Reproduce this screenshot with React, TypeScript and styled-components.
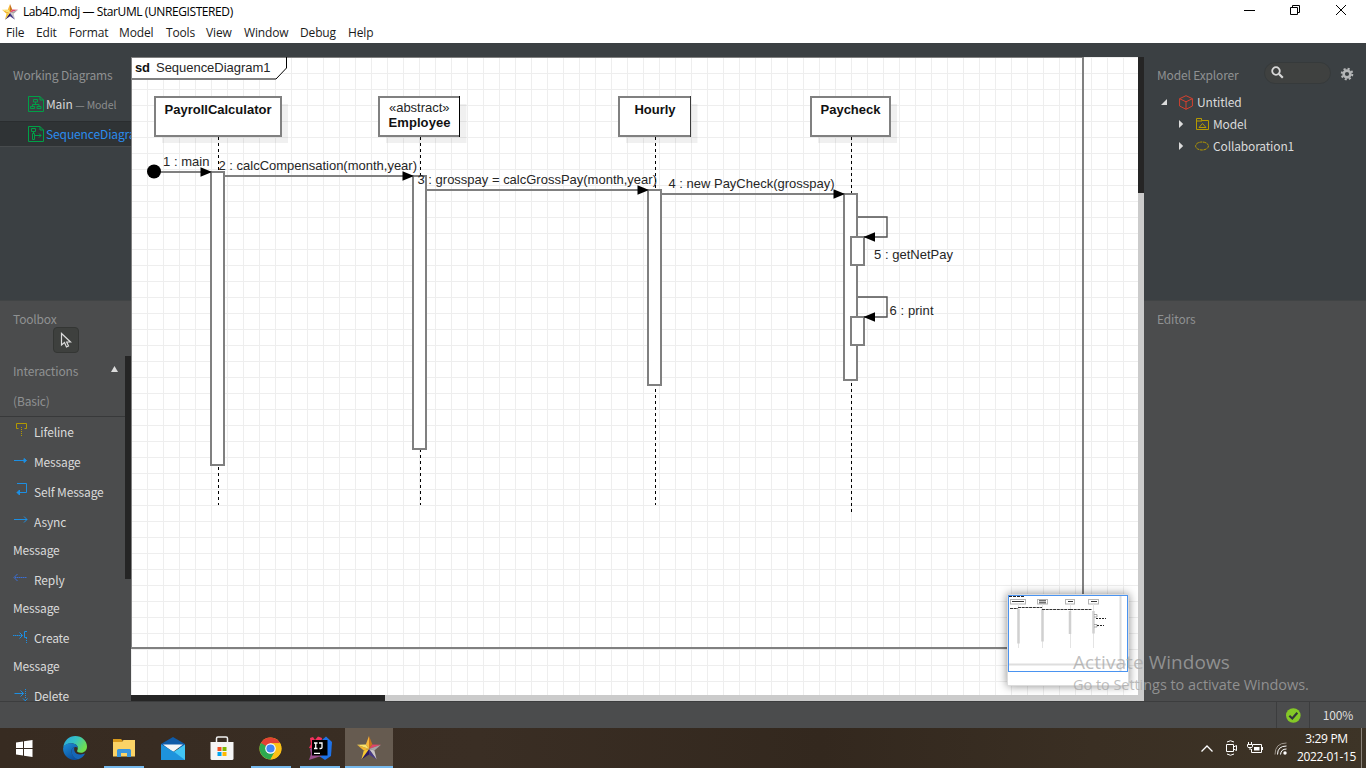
import React from "react";
import styled, { createGlobalStyle } from "styled-components";

const ui = `"Noto Sans CJK SC", "Noto Sans", sans-serif`;
const segoe = `"Open Sans", "Noto Sans", sans-serif`;

const Global = createGlobalStyle`
  * { box-sizing: border-box; }
  html, body { margin: 0; padding: 0; overflow: hidden; }
`;

const Screen = styled.div`
  width: 1366px;
  height: 768px;
  position: relative;
  display: flex;
  flex-direction: column;
  overflow: hidden;
  font-family: ${ui};
  background: #3b4043;
`;

/* ---------- window chrome ---------- */
const TitleBar = styled.header`
  height: 24px;
  flex: none;
  display: flex;
  align-items: flex-start;
  background: #fff;
  padding: 0 2px;
  > svg { margin-top: 4px; }
`;
const Title = styled.span`
  flex: 1;
  margin-left: 5px;
  font: 12px/24px ${segoe};
  letter-spacing: -0.41px;
  color: #000;
  white-space: nowrap;
`;
const WindowButton = styled.span<{ $w?: number }>`
  width: ${(p) => p.$w ?? 46}px;
  height: 20px;
  display: flex;
  align-items: center;
  justify-content: center;
`;
const MenuBar = styled.nav`
  height: 19px;
  flex: none;
  display: flex;
  background: #fff;
  padding-left: 6px;
`;
const MenuItem = styled.span<{ $w: number }>`
  width: ${(p) => p.$w}px;
  font: 12px/18px ${segoe};
  letter-spacing: -0.15px;
  color: #1a1a1a;
  white-space: nowrap;
`;

/* ---------- body ---------- */
const Body = styled.main`
  flex: 1;
  min-height: 0;
  display: flex;
`;
const Side = styled.aside<{ $w: number }>`
  width: ${(p) => p.$w}px;
  flex: none;
  display: flex;
  flex-direction: column;
  overflow: hidden;
`;
const UpperPane = styled.section`
  height: 257px;
  flex: none;
  padding-top: 20px;
  background: #3b4043;
`;
const LowerPane = styled.section`
  flex: 1;
  min-height: 0;
  padding-top: 6px;
  background: #4b4c4d;
  border-top: 1px solid #414445;
  overflow: hidden;
`;
const PaneTitle = styled.div`
  height: 24px;
  padding-left: 13px;
  font: 12px/24px ${ui};
  letter-spacing: -0.16px;
  color: #8f9192;
  white-space: nowrap;
`;
const DiagramRow = styled.div<{ $active?: boolean }>`
  height: ${(p) => (p.$active ? 26 : 34)}px;
  padding-left: 28px;
  display: flex;
  align-items: center;
  gap: 2px;
  font: 12px/22px ${ui};
  letter-spacing: -0.12px;
  color: ${(p) => (p.$active ? "#2b8ced" : "#d6d6d6")};
  background: ${(p) => (p.$active ? "#2f3335" : "transparent")};
  border-top: 1px solid ${(p) => (p.$active ? "#2a2d2f" : "transparent")};
  border-bottom: 1px solid ${(p) => (p.$active ? "#474b4d" : "transparent")};
  white-space: nowrap;
  svg { flex: none; }
`;
const Hint = styled.span`
  font-size: 10.5px;
  color: #8b8d8e;
`;
const SelectTool = styled.div`
  width: 26px;
  height: 26px;
  margin: -4px 0 0 53px;
  border: 1px solid #343634;
  border-radius: 4px;
  background: #3e403e;
  display: flex;
  align-items: center;
  justify-content: center;
`;
const ToolScroll = styled.div`
  display: flex;
  height: 345px;
  margin-top: 3px;
`;
const ToolList = styled.div`
  width: 125px;
  flex: none;
`;
const ToolThumb = styled.div`
  width: 6px;
  height: 223px;
  background: #252525;
`;
const Category = styled.div`
  height: 61px;
  display: flex;
  justify-content: space-between;
  padding: 0 7px 0 13px;
  border-bottom: 1px solid #38393a;
  font: 12px/30px ${ui};
  color: #8f9192;
  letter-spacing: -0.15px;
`;
const ToolRow = styled.div`
  padding-left: 13px;
  font: 12px/30px ${ui};
  letter-spacing: -0.15px;
  color: #dadada;
  white-space: nowrap;
`;
const ToolFirst = styled.div`
  height: 30px;
  display: flex;
  gap: 5px;
  svg { margin-top: 5px; flex: none; }
`;
const ToolRest = styled.div`
  height: 28px;
  line-height: 26px;
`;

/* ---------- editor ---------- */
const Editor = styled.section`
  flex: 1;
  position: relative;
  display: grid;
  grid-template-columns: 1007px 6px;
  grid-template-rows: 14px 638px 6px;
`;
const TopGap = styled.div`
  grid-column: 1 / 3;
`;
const Canvas = styled.div`
  background: #fff;
  overflow: hidden;
  svg { display: block; }
`;
const VTrack = styled.div`
  background: #cbcbcb;
`;
const VThumb = styled.div`
  height: 136px;
  background: #252525;
`;
const HTrack = styled.div`
  grid-column: 1 / 3;
  background: #cbcbcb;
`;
const HThumb = styled.div`
  width: 254px;
  height: 6px;
  background: #252525;
`;
const Minimap = styled.div`
  position: absolute;
  left: 876px;
  top: 551px;
  width: 122px;
  height: 92px;
  background: #fff;
  border: 1px solid #dcdcdc;
  box-shadow: 0 0 9px rgba(0, 0, 0, 0.45);
  svg { display: block; }
`;

/* ---------- model explorer ---------- */
const ExplorerHead = styled.div`
  display: flex;
  height: 24px;
`;
const Search = styled.div`
  width: 67px;
  height: 22px;
  margin: -1px 0 0 25px;
  padding: 0 0 1px 6px;
  border-radius: 11px;
  background: #3f4140;
  border: 1px solid #363a3b;
  display: flex;
  align-items: center;
`;
const GearSlot = styled.div`
  margin: 4px 0 0 9px;
  svg { display: block; }
`;
const Tree = styled.div`
  padding-top: 4px;
`;
const TreeRow = styled.div<{ $indent: number }>`
  height: 22px;
  display: flex;
  align-items: center;
  padding-left: ${(p) => p.$indent}px;
  font: 12px/20px ${ui};
  letter-spacing: -0.15px;
  color: #dadada;
  svg { flex: none; }
`;
const TreeIcon = styled.span<{ $w: number }>`
  width: ${(p) => p.$w}px;
  display: flex;
`;

/* ---------- status bar ---------- */
const StatusBar = styled.footer`
  height: 27px;
  flex: none;
  display: flex;
  justify-content: flex-end;
  background: #4b4c4d;
  border-top: 1px solid #3c3d3e;
`;
const StatusCell = styled.div<{ $w: number }>`
  width: ${(p) => p.$w}px;
  display: flex;
  align-items: center;
  justify-content: center;
  border-left: 1px solid #3c3d3e;
  font: 12px/26px ${ui};
  letter-spacing: -0.1px;
  color: #dedede;
`;
const Zoom = styled.span`
  margin-bottom: 1px;
`;

/* ---------- taskbar ---------- */
const Taskbar = styled.footer`
  height: 40px;
  flex: none;
  display: flex;
  background: linear-gradient(90deg, #372b21 0%, #3a2e24 35%, #33281e 60%, #3a2f23 80%, #3d3427 100%);
`;
const TaskCell = styled.div<{ $w?: number; $open?: boolean }>`
  width: ${(p) => p.$w ?? 49}px;
  height: 40px;
  display: flex;
  align-items: center;
  justify-content: center;
  background: ${(p) =>
    p.$open ? "linear-gradient(#76b9ed, #76b9ed) 5px 100% / 40px 2px no-repeat" : "none"};
`;
const ActiveTask = styled(TaskCell)`
  width: 48px;
  margin-left: 1px;
  background: #665b50;
  box-shadow: inset 0 -2px #76b9ed;
`;
const Tray = styled.div`
  margin-left: auto;
  display: flex;
  align-items: center;
  svg { display: block; }
`;
const TraySlot = styled.span<{ $w: number }>`
  width: ${(p) => p.$w}px;
  display: flex;
  justify-content: center;
`;
const Clock = styled.div`
  width: 67px;
  margin-right: 1px;
  text-align: center;
  font: 12px/18px ${segoe};
  letter-spacing: -0.35px;
  color: #fff;
  white-space: nowrap;
`;
const ShowDesktop = styled.div`
  width: 5px;
  height: 40px;
  border-left: 1px solid #8a837a;
`;

const Watermark = styled.div`
  position: absolute;
  left: 1073px;
  top: 649px;
  font-family: ${segoe};
  color: rgba(168, 168, 168, 0.75);
  white-space: nowrap;
`;
const WatermarkTitle = styled.div`
  font-size: 19px;
  line-height: 27px;
  letter-spacing: 0.06px;
`;
const WatermarkText = styled.div`
  font-size: 14.5px;
  line-height: 18px;
  letter-spacing: -0.05px;
`;

/* ---------- icons ---------- */
const Star = ({ size }: { size: number }) => (
  <svg width={size} height={size} viewBox="0 0 24 24">
    <path d="M12 0 L12 13 L8.8 8.4Z" fill="#f6b73c" />
    <path d="M12 0 L15.4 8.4 L12 13Z" fill="#c8731d" />
    <path d="M15.4 8.4 L24 8.8 L12 13Z" fill="#e0456a" />
    <path d="M24 8.8 L17.4 14.6 L12 13Z" fill="#a9a3a6" />
    <path d="M17.4 14.6 L19.6 23.5 L12 13Z" fill="#c9c4c6" />
    <path d="M19.6 23.5 L12 18.4 L12 13Z" fill="#473a86" />
    <path d="M12 18.4 L4.4 23.5 L12 13Z" fill="#2b1a63" />
    <path d="M4.4 23.5 L6.8 14.6 L12 13Z" fill="#f7c832" />
    <path d="M6.8 14.6 L0 8.8 L12 13Z" fill="#f2b52e" />
    <path d="M0 8.8 L8.8 8.4 L12 13Z" fill="#fbe36a" />
  </svg>
);

const ClassDiagramIcon = () => (
  <svg width="16" height="16" viewBox="0 0 16 16" fill="none" stroke="#00a047">
    <path d="M.5 .5H12L15.5 4V15.5H.5Z" />
    <path d="M12 .5V4H15.5" />
    <path d="M5.5 3.5H9.5V6H5.5ZM7.5 6V8.5M4.5 10.5V8.5H11V10.5M2.5 10.5H6.5V12.5H2.5ZM9 10.5H13V12.5H9Z" />
  </svg>
);
const SequenceDiagramIcon = () => (
  <svg width="16" height="16" viewBox="0 0 16 16" fill="none" stroke="#00a047">
    <path d="M.5 .5H12L15.5 4V15.5H.5Z" />
    <path d="M12 .5V4H15.5" />
    <path d="M3.5 2.5H7.5V5.5H3.5ZM5.5 5.5V7M4.5 7.5H6.5V13.5H4.5ZM7 9.5H13M11 7.5L13 9.5L11 11.5" />
  </svg>
);

const toolIcons: Record<string, React.ReactNode> = {
  Lifeline: (
    <g stroke="#b39800">
      <path d="M5.500 6.500H3.500V1.500H13.500V6.500H11.500" />
      <path d="M8.500 5V15" strokeDasharray="1 1" />
    </g>
  ),
  Message: (
    <g stroke="#1c8fe3">
      <path d="M1 8.500H13" />
      <path d="M11 6.500L13.500 8.500L11 10.500Z" fill="#1c8fe3" />
    </g>
  ),
  Self: (
    <g stroke="#1c8fe3">
      <path d="M4 1.500H13.500V10.500H4" />
      <path d="M6.500 8L4 10.500L6.500 13Z" fill="#1c8fe3" />
    </g>
  ),
  Async: (
    <g stroke="#1c8fe3">
      <path d="M1 7.500H14" />
      <path d="M11 4.500L14 7.500L11 10.500" />
    </g>
  ),
  Reply: (
    <g stroke="#3b6fd6">
      <path d="M2 7.500H14" strokeDasharray="1.500 .5" />
      <path d="M4.500 4L1 7.500L4.500 11" />
    </g>
  ),
  Create: (
    <g stroke="#1c8fe3">
      <path d="M0 7.500H9" strokeDasharray="1.500 .5" />
      <path d="M6.500 4.500L9.500 7.500L6.500 10.500M14 3.500H11.500V9.500H14" />
      <path d="M13.500 10V16" strokeDasharray="1 1" />
    </g>
  ),
  Delete: (
    <g stroke="#1c8fe3">
      <path d="M1.500 7.500H10.500M7.500 4.500L10.500 7.500L7.500 10.500" />
      <path d="M12.500 3V12" strokeDasharray="1 1" />
      <path d="M10 12.500L14.500 17M14.500 12.500L10 17" />
    </g>
  ),
};
const ToolIcon = ({ name }: { name: string }) => (
  <svg width="16" height="18" viewBox="0 0 16 18" fill="none">
    {toolIcons[name]}
  </svg>
);

const tools: { icon: string; first: string; rest?: string }[] = [
  { icon: "Lifeline", first: "Lifeline" },
  { icon: "Message", first: "Message" },
  { icon: "Self", first: "Self Message" },
  { icon: "Async", first: "Async", rest: "Message" },
  { icon: "Reply", first: "Reply", rest: "Message" },
  { icon: "Create", first: "Create", rest: "Message" },
  { icon: "Delete", first: "Delete" },
];

const Collapsed = () => (
  <svg width="5" height="8" viewBox="0 0 5 8">
    <path d="M0 0L4.200 4L0 8Z" fill="#dcdcdc" />
  </svg>
);

/* ---------- sequence diagram ---------- */
type LabelProps = { x: number; y: number; w: number; bold?: boolean; children: string };
const Label = ({ x, y, w, bold, children }: LabelProps) => (
  <text
    x={x}
    y={y}
    textLength={w}
    fontFamily="'Liberation Sans', Arial, sans-serif"
    fontSize="13"
    fontWeight={bold ? 700 : 400}
    fill={bold ? "#111" : "#262626"}
    xmlSpace="preserve"
  >
    {children}
  </text>
);

const lifelines = [
  { l: 155, r: 281, x: 218.5, end: 505, barL: 211, barT: 172, barB: 465 },
  { l: 379, r: 459.5, x: 420.5, end: 505, barL: 413, barT: 176, barB: 449 },
  { l: 619, r: 690.5, x: 655.5, end: 505, barL: 648, barT: 190, barB: 385 },
  { l: 811, r: 890, x: 851.5, end: 512, barL: 844, barT: 194, barB: 380 },
];
const messages = [
  { y: 172, from: 160, to: 211 },
  { y: 176, from: 224, to: 413 },
  { y: 190, from: 426, to: 648 },
  { y: 194, from: 661, to: 844 },
];
const soft = { stroke: "#808080", strokeWidth: 2 };

const Diagram = () => (
  <svg width="1007" height="638" viewBox="131 57 1007 638" fill="none" stroke="none">
    <defs>
      <pattern id="grid" x="147" y="73" width="16" height="16" patternUnits="userSpaceOnUse">
        <path d="M0 0H16V1H1V16H0Z" fill="#eeeeee" />
      </pattern>
    </defs>
    <rect x="131" y="57" width="1007" height="638" fill="url(#grid)" />
    <path d="M131 57H1083V648H131Z" {...soft} />
    <path d="M131 57H286.500V68L276 79H131Z" fill="#fff" />
    <path d="M276 79H131V57H287" {...soft} />
    <path d="M286.500 57V68L276 79" stroke="#000" />
    {lifelines.map((n) => (
      <g key={n.x}>
        <rect x={n.l + 7} y="104" width={n.r - n.l} height="39" fill="#000" fillOpacity=".06" />
        <rect x={n.l} y="97" width={n.r - n.l} height="39" fill="#fff" />
        <path d={`M${n.r} 97H${n.l}V136H${n.r}`} {...soft} />
        {n.r % 1 ? (
          <path d={`M${n.r} 96V137`} stroke={n.r === 459.5 ? "#000" : "#3a3a3a"} />
        ) : (
          <path d={`M${n.r} 96V137`} {...soft} />
        )}
        <path d={`M${n.x} 137V${n.end}`} stroke="#000" strokeDasharray="3 3" />
        <rect x={n.barL} y={n.barT} width="13" height={n.barB - n.barT} fill="#fff" {...soft} />
      </g>
    ))}
    {messages.map((m) => (
      <g key={m.y}>
        <path d={`M${m.from} ${m.y}H${m.to}`} {...soft} />
        <path d={`M${m.to + 1} ${m.y}L${m.to - 10.500} ${m.y - 4.700}V${m.y + 4.700}Z`} fill="#000" />
      </g>
    ))}
    <circle cx="154" cy="171.500" r="7" fill="#000" />
    {[217, 297].map((y) => (
      <g key={y}>
        <rect x="851" y={y + 20} width="13" height="28" fill="#fff" {...soft} />
        <path d={`M858 ${y}H887V${y + 20}H864`} stroke="#505050" strokeWidth="1.400" />
        <path d={`M863.500 ${y + 20}L875 ${y + 15.300}V${y + 24.700}Z`} fill="#000" />
      </g>
    ))}
    <Label x={135} y={72} w={15} bold>sd</Label>
    <Label x={156} y={72} w={114.500}>SequenceDiagram1</Label>
    <Label x={164.500} y={114} w={107} bold>PayrollCalculator</Label>
    <Label x={389} y={112} w={60.500}>«abstract»</Label>
    <Label x={388.500} y={127} w={62} bold>Employee</Label>
    <Label x={634.500} y={114} w={41} bold>Hourly</Label>
    <Label x={820.500} y={114} w={60} bold>Paycheck</Label>
    <Label x={163} y={166} w={46.500}>1 : main</Label>
    <Label x={218.500} y={170} w={198.500}>2 : calcCompensation(month,year)</Label>
    <Label x={417.500} y={184} w={239.500}>3 : grosspay = calcGrossPay(month,year)</Label>
    <Label x={668.500} y={188} w={166}>4 : new PayCheck(grosspay)</Label>
    <Label x={874} y={259} w={79}>5 : getNetPay</Label>
    <Label x={889.500} y={315} w={44}>6 : print</Label>
  </svg>
);

const MiniDiagram = () => (
  <svg width="120" height="90" viewBox="1008 595 120 90" fill="none">
    <path d="M1120.500 596V671M1009 664.500H1126" stroke="#dedede" strokeWidth="2" />
    <path d="M1009 596.500H1024" stroke="#222" strokeDasharray="3 1" />
    <g stroke="#b4b4b4" fill="#fff">
      <rect x="1010.500" y="599.500" width="15" height="4.500" />
      <rect x="1037.500" y="599.500" width="10" height="4.500" />
      <rect x="1065.500" y="599.500" width="9" height="4.500" />
      <rect x="1088.500" y="599.500" width="10" height="4.500" />
    </g>
    <path d="M1012 601.500H1024M1039 600.800H1046M1039 602.800H1046M1068 601.500H1073M1091 601.500H1097" stroke="#333" />
    <path d="M1018.500 604V648M1042.500 604V648M1070.500 604V648M1093.500 604V648" stroke="#e4e4e4" />
    <path d="M1018.500 609V643.500M1042.500 609V641.500M1070 611V634M1093.500 611V633.500" stroke="#d0d0d0" strokeWidth="2.500" />
    <path d="M1010 608.500H1018M1018 607.500H1042M1042 609.500H1070M1070 609.500H1092" stroke="#333" strokeDasharray="3 .7" />
    <path d="M1094 614.500H1097V617H1094M1094 624.500H1097V627H1094" stroke="#888" strokeWidth=".7" />
    <path d="M1096 618.500H1106M1097 625.500H1104" stroke="#222" strokeDasharray="2 1" />
    <rect x="1008.500" y="595.500" width="119" height="76" stroke="#4a93f0" />
  </svg>
);

const Edge = () => (
  <svg width="24" height="24" viewBox="0 0 24 24">
    <defs>
      <linearGradient id="ea" x1="0" y1="0" x2="1" y2=".5">
        <stop offset="0" stopColor="#2aa5e0" />
        <stop offset=".5" stopColor="#35c1c4" />
        <stop offset="1" stopColor="#6fe04f" />
      </linearGradient>
      <linearGradient id="eb" x1="0" y1="0" x2=".6" y2="1">
        <stop offset="0" stopColor="#1d8fd8" />
        <stop offset="1" stopColor="#0b4f9e" />
      </linearGradient>
    </defs>
    <path d="M0.300 11C1.200 4.500 6 0 12.300 0C19 0 24 5 24 10.500C24 14.500 21 16.800 17.800 16.800C15 16.800 13.500 15.700 14.200 14.600C15.500 12.500 15 8 10 7.400C6 7 2 8.500 .3 11Z" fill="url(#ea)" />
    <path d="M.1 12.500C.4 9 4 7 8.800 7.200C12.500 7.500 14.600 9.300 14.900 11.600C12 10 8.600 11.500 8.500 15C8.500 19.500 12 22.500 15.500 23C14 23.700 12.500 24 11.500 24C5 23.700 -.2 18.500 .1 12.500Z" fill="url(#eb)" />
    <path d="M8.500 15C8.500 12.500 9.800 11.200 11.500 10.900C10.500 13 11 18.500 17.500 18.500C19.500 18.500 21 18 22.200 17.300C21 20 18.500 22.500 15.500 23.200C12 23 8.500 19.500 8.500 15Z" fill="#1566b8" />
  </svg>
);
const Explorer = () => (
  <svg width="22" height="20" viewBox="0 0 22 20">
    <path d="M0 1H8L9.500 2.500V5H0Z" fill="#d99a1c" />
    <path d="M0 4H9L10.500 2H22V18.500H0Z" fill="#fbd366" />
    <path d="M4 19V12.500Q4 11 5.500 11H16.500Q18 11 18 12.500V19H14V15H8V19Z" fill="#3a96dd" />
  </svg>
);
const Mail = () => (
  <svg width="24" height="24" viewBox="0 0 24 24">
    <path d="M0 8L12 1L24 8V12H0Z" fill="#0f5ba8" />
    <path d="M2 8.500H22L12 16Z" fill="#f4f6f8" />
    <path d="M0 8.500L12 16L0 24Z" fill="#2aa8ea" />
    <path d="M24 8.500V24H0L24 8.500Z" fill="#42c6f5" />
    <path d="M0 8.500L14 16.500L24 24H0Z" fill="#1e93dc" />
  </svg>
);
const Store = () => (
  <svg width="24" height="24" viewBox="0 0 24 24">
    <path d="M6.500 7V2.500Q6.500 1 8 1H16Q17.500 1 17.500 2.500V7" fill="none" stroke="#f0f0f0" strokeWidth="1.500" />
    <path d="M.5 6H23.500V22.500Q23.500 24 22 24H2Q.5 24 .5 22.500Z" fill="#f5f5f5" />
    <path d="M7.500 11H11.500V15H7.500Z" fill="#f25022" />
    <path d="M12.500 11H16.500V15H12.500Z" fill="#7fba00" />
    <path d="M7.500 16H11.500V20H7.500Z" fill="#00a4ef" />
    <path d="M12.500 16H16.500V20H12.500Z" fill="#ffb900" />
  </svg>
);
const Chrome = () => (
  <svg width="23" height="23" viewBox="0 0 48 48">
    <circle cx="24" cy="24" r="23" fill="#fbc116" />
    <path d="M24 13H44.100A23 23 0 0 0 4.100 12.500L14.500 29.500Z" fill="#e34133" />
    <path d="M4.100 12.500A23 23 0 0 0 24 47L33.500 29.500L24 24Z" fill="#2da94f" />
    <path d="M33.500 29.500L24 47A23 23 0 0 0 44 13H24Z" fill="#fbc116" />
    <circle cx="24" cy="24" r="11" fill="#fff" />
    <circle cx="24" cy="24" r="8.600" fill="#4285f4" />
  </svg>
);
const IntelliJ = () => (
  <svg width="24" height="24" viewBox="0 0 24 24">
    <path d="M2 2L5 1L7 4L10 .5L14 2L12 14L1 12L3 8Z" fill="#f5315f" />
    <path d="M14 4L18 .5L24 6L23 20L17 24L11 20Z" fill="#1e72e8" />
    <path d="M2 13L8 10L14 20L10 21L1 24L3 18Z" fill="#9a4f8f" />
    <rect x="4" y="4" width="15.500" height="15.500" fill="#000" />
    <path d="M6 7H9.500M7.750 7V12.500M6 12.500H9.500M11 7H14V11.500Q14 12.500 12.500 12.500H11.500M6 17.300H12" fill="none" stroke="#fff" strokeWidth="1.300" />
  </svg>
);

export default function App() {
  return (
    <Screen>
      <Global />
      <TitleBar>
        <Star size={16} />
        <Title>Lab4D.mdj — StarUML (UNREGISTERED)</Title>
        <WindowButton $w={45}>
          <svg width="11" height="11"><path d="M0 5.500H11" stroke="#000" /></svg>
        </WindowButton>
        <WindowButton>
          <svg width="10" height="10" fill="none" stroke="#000">
            <path d="M.5 2.500H7.500V9.500H.5ZM2.500 2.500V.5H9.500V7.500H7.500" />
          </svg>
        </WindowButton>
        <WindowButton>
          <svg width="10" height="10" stroke="#000"><path d="M0 0L10 10M10 0L0 10" /></svg>
        </WindowButton>
      </TitleBar>
      <MenuBar>
        <MenuItem $w={30}>File</MenuItem>
        <MenuItem $w={33}>Edit</MenuItem>
        <MenuItem $w={50}>Format</MenuItem>
        <MenuItem $w={47}>Model</MenuItem>
        <MenuItem $w={40}>Tools</MenuItem>
        <MenuItem $w={38}>View</MenuItem>
        <MenuItem $w={56}>Window</MenuItem>
        <MenuItem $w={48}>Debug</MenuItem>
        <MenuItem $w={40}>Help</MenuItem>
      </MenuBar>

      <Body>
        <Side $w={131}>
          <UpperPane>
            <PaneTitle>Working Diagrams</PaneTitle>
            <DiagramRow>
              <ClassDiagramIcon />
              <span>Main <Hint>— Model</Hint></span>
            </DiagramRow>
            <DiagramRow $active>
              <SequenceDiagramIcon />
              <span>SequenceDiagram1</span>
            </DiagramRow>
          </UpperPane>
          <LowerPane>
            <PaneTitle>Toolbox</PaneTitle>
            <SelectTool>
              <svg width="12" height="17" viewBox="0 0 12 17" fill="none" stroke="#dcdcdc" strokeWidth="1.200">
                <path d="M1.500 1.500V13L4.500 10.500L6.500 15L8.500 14L6.700 10H10.500Z" />
              </svg>
            </SelectTool>
            <ToolScroll>
              <ToolList>
                <Category>
                  <span>Interactions<br />(Basic)</span>
                  <svg width="7" height="30" viewBox="0 0 7 30"><path d="M0 16L3.500 10L7 16Z" fill="#dcdcdc" /></svg>
                </Category>
                {tools.map((t) => (
                  <ToolRow key={t.icon}>
                    <ToolFirst>
                      <ToolIcon name={t.icon} />
                      {t.first}
                    </ToolFirst>
                    {t.rest && <ToolRest>{t.rest}</ToolRest>}
                  </ToolRow>
                ))}
              </ToolList>
              <ToolThumb />
            </ToolScroll>
          </LowerPane>
        </Side>

        <Editor>
          <TopGap />
          <Canvas><Diagram /></Canvas>
          <VTrack><VThumb /></VTrack>
          <HTrack><HThumb /></HTrack>
          <Minimap><MiniDiagram /></Minimap>
        </Editor>

        <Side $w={222}>
          <UpperPane>
            <ExplorerHead>
              <PaneTitle>Model Explorer</PaneTitle>
              <Search>
                <svg width="13" height="13" viewBox="0 0 13 13" fill="none" stroke="#d8d8d8">
                  <circle cx="5" cy="5" r="3.800" strokeWidth="1.800" />
                  <path d="M8 8L11.800 11.800" strokeWidth="2.200" />
                </svg>
              </Search>
              <GearSlot>
                <svg width="14" height="14" viewBox="0 0 14 14" fill="none" stroke="#b4b6b7">
                  <circle cx="7" cy="7" r="3.400" strokeWidth="2.600" />
                  <circle cx="7" cy="7" r="5.300" strokeWidth="2" strokeDasharray="2.080 2.080" />
                </svg>
              </GearSlot>
            </ExplorerHead>
            <Tree>
              <TreeRow $indent={17}>
                <TreeIcon $w={18}>
                  <svg width="6" height="6"><path d="M6 0V6H0Z" fill="#dcdcdc" /></svg>
                </TreeIcon>
                <TreeIcon $w={18}>
                  <svg width="14" height="15" viewBox="0 0 14 15" fill="none" stroke="#d6402f">
                    <path d="M7 .7L13.400 3.700V11L7 14.300L.6 11V3.700ZM.6 3.700L7 6.800L13.400 3.700M7 6.800V14.300" />
                  </svg>
                </TreeIcon>
                Untitled
              </TreeRow>
              <TreeRow $indent={35}>
                <TreeIcon $w={17}><Collapsed /></TreeIcon>
                <TreeIcon $w={17}>
                  <svg width="13" height="12" viewBox="0 0 13 12" fill="none" stroke="#b69a00">
                    <path d="M.5 .5H5.500V2.500H12.500V11.500H.5ZM.5 3H6M3 9.500L6.500 5.500L10 9.500Z" />
                  </svg>
                </TreeIcon>
                Model
              </TreeRow>
              <TreeRow $indent={35}>
                <TreeIcon $w={16}><Collapsed /></TreeIcon>
                <TreeIcon $w={18}>
                  <svg width="14" height="10" viewBox="0 0 14 10" fill="none" stroke="#b69a00">
                    <ellipse cx="7" cy="5" rx="6.400" ry="4" strokeDasharray="3 .6" />
                  </svg>
                </TreeIcon>
                Collaboration1
              </TreeRow>
            </Tree>
          </UpperPane>
          <LowerPane>
            <PaneTitle>Editors</PaneTitle>
          </LowerPane>
        </Side>
      </Body>

      <StatusBar>
        <StatusCell $w={33}>
          <svg width="16" height="16" viewBox="0 0 16 16">
            <circle cx="8.300" cy="8.500" r="7.300" fill="#84c827" />
            <path d="M4.300 8.700L7.300 11.500L12.300 5.700" fill="none" stroke="#33363a" strokeWidth="2.200" />
          </svg>
        </StatusCell>
        <StatusCell $w={57}><Zoom>100%</Zoom></StatusCell>
      </StatusBar>

      <Taskbar>
        <TaskCell $w={48}>
          <svg width="17" height="17" viewBox="0 0 17 17" fill="#fff">
            <path d="M0 2.400L7 1.400V8H0ZM8 1.200L16.500 0V8H8ZM0 9H7V15.600L0 14.600ZM8 9H16.500V17L8 15.800Z" />
          </svg>
        </TaskCell>
        <TaskCell $w={2} />
        <TaskCell><Edge /></TaskCell>
        <TaskCell $open><Explorer /></TaskCell>
        <TaskCell><Mail /></TaskCell>
        <TaskCell><Store /></TaskCell>
        <TaskCell $open><Chrome /></TaskCell>
        <TaskCell $open><IntelliJ /></TaskCell>
        <ActiveTask><Star size={24} /></ActiveTask>
        <Tray>
          <TraySlot $w={24}>
            <svg width="12" height="7" fill="none" stroke="#fff" strokeWidth="1.300"><path d="M.5 6.500L6 1L11.500 6.500" /></svg>
          </TraySlot>
          <TraySlot $w={24}>
            <svg width="12" height="16" viewBox="0 0 12 16" fill="none" stroke="#fff">
              <path d="M1.500 4.500H8.500V11.500H1.500ZM8.500 7L11.500 5.500V10.500L8.500 9M2 2Q5.500 -.5 9 2M2 14Q5.500 16.500 9 14" />
            </svg>
          </TraySlot>
          <TraySlot $w={24}>
            <svg width="16" height="12" viewBox="0 0 16 12" fill="none" stroke="#fff">
              <path d="M6 2.500H14.500V10.500H4.500V7M15.500 5V8" />
              <path d="M7 5H12.500V8.500H7Z" fill="#fff" stroke="none" />
              <path d="M1.500 0V2M4.500 0V2M.5 2.500H5.500V4.500Q5.500 5.500 4 5.500H2Q.5 5.500 .5 4.500ZM3 5.500V8" />
            </svg>
          </TraySlot>
          <TraySlot $w={26}>
            <svg width="13" height="13" viewBox="0 0 13 13" fill="none" stroke="#fff">
              <path d="M1 12.500Q1 1 12.500 1" stroke="#9c958c" />
              <path d="M3.500 12.500Q3.500 4 12.500 4M6.500 12.500Q7 7 12.500 7" />
              <circle cx="11" cy="11" r="1.700" fill="#fff" stroke="none" />
            </svg>
          </TraySlot>
          <Clock>3:29 PM<br />2022-01-15</Clock>
          <ShowDesktop />
        </Tray>
      </Taskbar>

      <Watermark>
        <WatermarkTitle>Activate Windows</WatermarkTitle>
        <WatermarkText>Go to Settings to activate Windows.</WatermarkText>
      </Watermark>
    </Screen>
  );
}
